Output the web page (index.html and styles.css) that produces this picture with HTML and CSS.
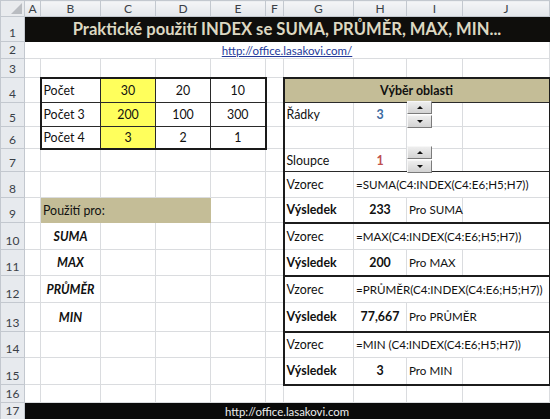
FILE: index.html
```html
<!DOCTYPE html>
<html lang="cs">
<head>
<meta charset="utf-8">
<title>INDEX se SUMA</title>
<link rel="stylesheet" href="styles.css">
</head>
<body>
<table class="sheet">
<colgroup>
<col class="w-rh"><col class="w-a"><col class="w-b"><col class="w-c"><col class="w-d"><col class="w-e"><col class="w-f"><col class="w-g"><col class="w-h"><col class="w-i"><col class="w-j"><col class="w-k">
</colgroup>
<tr class="h16">
<th class="corner"><span class="tri"></span></th><th class="ch">A</th><th class="ch">B</th><th class="ch">C</th><th class="ch">D</th><th class="ch">E</th><th class="ch">F</th><th class="ch">G</th><th class="ch">H</th><th class="ch">I</th><th class="ch">J</th><th class="ch"></th>
</tr>
<tr class="h25">
<th class="rh">1</th><td colspan="10" class="title">Praktické použití INDEX se SUMA, PRŮMĚR, MAX, MIN...</td><td class="blk"></td>
</tr>
<tr class="h17">
<th class="rh">2</th><td colspan="10" class="linkcell"><span class="url">http://office.lasakovi.com/</span></td><td></td>
</tr>
<tr class="h19">
<th class="rh">3</th><td></td><td></td><td></td><td></td><td></td><td></td><td></td><td></td><td></td><td></td><td></td>
</tr>
<tr class="h25">
<th class="rh">4</th><td></td>
<td class="t tt tl">Počet</td><td class="t tt yel num">30</td><td class="t tt num">20</td><td class="t tt tr num">10</td>
<td></td><td colspan="4" class="boxhead bt bl br ln">Výběr oblasti</td><td></td>
</tr>
<tr class="h24">
<th class="rh">5</th><td></td>
<td class="t tl">Počet 3</td><td class="t yel num">200</td><td class="t num">100</td><td class="t tr num">300</td>
<td></td><td class="bl">Řádky</td><td class="num blue">3</td><td class="spincell"><div class="spin s1"><span class="sb up"></span><span class="sb dn"></span></div></td><td class="br"></td><td></td>
</tr>
<tr class="h22">
<th class="rh">6</th><td></td>
<td class="t tb tl">Počet 4</td><td class="t tb yel num">3</td><td class="t tb num">2</td><td class="t tb tr num">1</td>
<td></td><td class="bl"></td><td></td><td></td><td class="br"></td><td></td>
</tr>
<tr class="h23">
<th class="rh">7</th><td></td><td></td><td></td><td></td><td></td>
<td></td><td class="bl ln">Sloupce</td><td class="num red ln">1</td><td class="spincell ln"><div class="spin s2"><span class="sb up"></span><span class="sb dn"></span></div></td><td class="br ln"></td><td></td>
</tr>
<tr class="h26">
<th class="rh">8</th><td></td><td></td><td></td><td></td><td></td>
<td></td><td class="bl">Vzorec</td><td colspan="3" class="br fx">=SUMA(C4:INDEX(C4:E6;H5;H7))</td><td></td>
</tr>
<tr class="h25">
<th class="rh">9</th><td></td><td colspan="3" class="tan">Použití pro:</td><td></td>
<td></td><td class="bl bb bold">Výsledek</td><td class="bb bold num">233</td><td class="bb pro">Pro SUMA</td><td class="bb br"></td><td></td>
</tr>
<tr class="h27">
<th class="rh">10</th><td></td><td class="fn">SUMA</td><td></td><td></td><td></td>
<td></td><td class="bl">Vzorec</td><td colspan="3" class="br fx">=MAX(C4:INDEX(C4:E6;H5;H7))</td><td></td>
</tr>
<tr class="h26">
<th class="rh">11</th><td></td><td class="fn">MAX</td><td></td><td></td><td></td>
<td></td><td class="bl bb bold">Výsledek</td><td class="bb bold num">200</td><td class="bb pro">Pro MAX</td><td class="bb br"></td><td></td>
</tr>
<tr class="h27">
<th class="rh">12</th><td></td><td class="fn">PRŮMĚR</td><td></td><td></td><td></td>
<td></td><td class="bl">Vzorec</td><td colspan="3" class="br fx">=PRŮMĚR(C4:INDEX(C4:E6;H5;H7))</td><td></td>
</tr>
<tr class="h29">
<th class="rh">13</th><td></td><td class="fn">MIN</td><td></td><td></td><td></td>
<td></td><td class="bl bb bold">Výsledek</td><td class="bb bold num">77,667</td><td colspan="2" class="bb br pro">Pro PRŮMĚR</td><td></td>
</tr>
<tr class="h26">
<th class="rh">14</th><td></td><td></td><td></td><td></td><td></td>
<td></td><td class="bl">Vzorec</td><td colspan="3" class="br fx">=MIN (C4:INDEX(C4:E6;H5;H7))</td><td></td>
</tr>
<tr class="h27">
<th class="rh">15</th><td></td><td></td><td></td><td></td><td></td>
<td></td><td class="bl bb bold">Výsledek</td><td class="bb bold num">3</td><td class="bb pro">Pro MIN</td><td class="bb br"></td><td></td>
</tr>
<tr class="h18">
<th class="rh">16</th><td></td><td></td><td></td><td></td><td></td><td></td><td></td><td></td><td></td><td></td><td></td>
</tr>
<tr class="h17">
<th class="rh">17</th><td colspan="10" class="foot">http://office.lasakovi.com</td><td class="blk"></td>
</tr>
</table>
</body>
</html>
```
FILE: styles.css
```css
html, body {
  margin: 0;
  padding: 0;
  background: #ffffff;
  overflow: hidden;
}

.sheet {
  border-collapse: collapse;
  table-layout: fixed;
  width: 589px;
  font-family: "Lato", "Open Sans", sans-serif;
  font-size: 12.4px;
  color: #111;
}

.w-rh { width: 24px; }
.w-a { width: 16px; }
.w-b { width: 60px; }
.w-c { width: 55px; }
.w-d { width: 55px; }
.w-e { width: 55px; }
.w-f { width: 18px; }
.w-g { width: 70px; }
.w-h { width: 53px; }
.w-i { width: 56px; }
.w-j { width: 87px; }
.w-k { width: 40px; }

.h16 { height: 16px; }
.h17 { height: 17px; }
.h18 { height: 18px; }
.h19 { height: 19px; }
.h20 { height: 20px; }
.h22 { height: 22px; }
.h23 { height: 23px; }
.h24 { height: 24px; }
.h25 { height: 25px; }
.h26 { height: 26px; }
.h27 { height: 27px; }
.h29 { height: 29px; }

td {
  border: 1px solid #dadcdf;
  padding: 0 2px;
  white-space: nowrap;
  overflow: visible;
  vertical-align: middle;
}

th {
  padding: 0;
  font-weight: normal;
  font-size: 12px;
  line-height: 14px;
  color: #3a3f47;
  background: #e7eaee;
  border: 1px solid #c3c8cf;
}

.ch {
  text-align: center;
  vertical-align: middle;
  background: linear-gradient(#f4f5f7, #e3e6ea);
}

.rh {
  text-align: center;
  vertical-align: bottom;
  padding-bottom: 1px;
}

.corner {
  text-align: right;
  vertical-align: bottom;
  background: #e9ebee;
}

.tri {
  display: inline-block;
  width: 0;
  height: 0;
  border-left: 11px solid transparent;
  border-bottom: 11px solid #b9bcc1;
  margin: 0 2px 2px 0;
  vertical-align: bottom;
}

.title {
  background: #0f0e0c;
  border-color: #0f0e0c;
  color: #ddd8c2;
  font-weight: bold;
  font-size: 16.6px;
  text-align: center;
}

.blk {
  background: #0f0e0c;
  border-color: #0f0e0c;
}

.linkcell {
  text-align: center;
}

.url {
  font-size: 11.5px;
  color: #23399a;
  text-decoration: underline;
}

.foot {
  background: #0a0a0a;
  border-color: #0a0a0a;
  color: #ececec;
  text-align: center;
  font-size: 11.4px;
  line-height: 13px;
}

/* left data table */
.t { border: 1px solid #2a2a2a; }
.tt { border-top: 2px solid #1a1a1a; }
.tb { border-bottom: 2px solid #1a1a1a; }
.tl { border-left: 2px solid #1a1a1a; }
.tr { border-right: 2px solid #1a1a1a; }

.yel { background: #ffff5c; }
.num { text-align: center; }

/* right selection box */
.bl { border-left: 2px solid #1c1c1c; }
.br { border-right: 2px solid #1c1c1c; }
.bt { border-top: 2px solid #1c1c1c; }
.bb { border-bottom: 2px solid #1c1c1c; }
.ln { border-bottom: 1px solid #2a2a2a; }

.boxhead {
  background: #c4bd97;
  font-weight: bold;
  text-align: center;
}

.tan {
  background: #c4bd97;
  border-color: #c4bd97;
}

.blue { color: #3b6aa0; font-weight: bold; }
.red { color: #c0504d; font-weight: bold; }
.bold { font-weight: bold; }

.fx {
  font-size: 11.6px;
}

.pro {
  font-size: 11.6px;
}

.fn {
  font-weight: bold;
  font-style: italic;
  text-align: center;
}

.spincell {
  position: relative;
  padding: 0;
}

.spin {
  position: absolute;
  left: 0;
  width: 25px;
  display: flex;
  flex-direction: column;
  gap: 1px;
}

.s1 { top: -2px; }
.s2 { top: -3px; }

.sb {
  height: 13px;
  box-sizing: border-box;
  border: 1px solid;
  border-color: #f7f7f7 #7b7b7b #7b7b7b #f7f7f7;
  background: linear-gradient(#eeeeee, #d3d3d3);
  display: flex;
  align-items: center;
  justify-content: center;
}

.up::after {
  content: "";
  border-left: 3.5px solid transparent;
  border-right: 3.5px solid transparent;
  border-bottom: 3.5px solid #111;
}

.dn::after {
  content: "";
  border-left: 3.5px solid transparent;
  border-right: 3.5px solid transparent;
  border-top: 3.5px solid #111;
}
```
